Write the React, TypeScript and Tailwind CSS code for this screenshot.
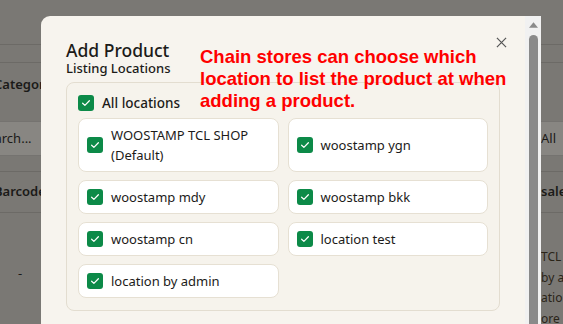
import React from 'react';

const locations = [
  { name: 'WOOSTAMP TCL SHOP (Default)' },
  { name: 'woostamp ygn' },
  { name: 'woostamp mdy' },
  { name: 'woostamp bkk' },
  { name: 'woostamp cn' },
  { name: 'location test' },
  { name: 'location by admin' },
];

function Check() {
  return (
    <span className="flex h-4 w-4 shrink-0 items-center justify-center rounded-[3px] bg-[#0c8a48]">
      <svg viewBox="0 0 16 16" className="h-3 w-3" fill="none">
        <path d="M3.5 8.3l3 2.9 6-6.2" stroke="#fff" strokeWidth="1.6" strokeLinecap="round" strokeLinejoin="round" />
      </svg>
    </span>
  );
}

function Background() {
  return (
    <div className="flex h-[324px] flex-col bg-[#7a7874] text-[13px] text-[#1b1a18] font-['Noto_Sans',sans-serif]">
      <div className="h-[45px] shrink-0 border-b border-[#6c6a66]" />
      <div className="h-[18px] shrink-0 border-b border-[#6c6a66]" />
      <div className="flex h-[44px] shrink-0 items-center font-semibold">
        <span className="-ml-[6px]">Category</span>
      </div>
      <div className="mt-[14px] flex h-[35px] shrink-0 items-center justify-between border-y border-[#757370] bg-[#888682]">
        <span className="-ml-[20px]">Search...</span>
        <span className="w-[22px] overflow-hidden whitespace-nowrap">All</span>
      </div>
      <div className="h-[16px] shrink-0 border-b border-[#6c6a66]" />
      <div className="flex h-[41px] shrink-0 items-center justify-between border-b border-[#6c6a66] font-semibold">
        <span className="-ml-[6px]">Barcode</span>
        <span className="w-[22px] overflow-hidden whitespace-nowrap">sale</span>
      </div>
      <div className="flex flex-1 justify-between">
        <span className="ml-[18px] mt-[51px]">-</span>
        <div className="mt-[34px] flex w-[22px] flex-col overflow-hidden whitespace-nowrap text-[12px] leading-[20.5px] text-[#2a2418]">
          <span>TCL SHOP</span>
          <span>by admin</span>
          <span>ation</span>
          <span>ore</span>
        </div>
      </div>
    </div>
  );
}

export default function App() {
  return (
    <div className="relative h-[324px] w-[563px] overflow-hidden">
      <Background />

      {/* Modal */}
      <div className="absolute left-[41px] top-[16px] flex h-[320px] w-[500px] overflow-hidden rounded-tl-[9px] bg-[#f7f4ee] font-['Noto_Sans',sans-serif] text-[#1c1b19]">
        <div className="relative flex-1 pl-[25px] pr-[25px] pt-[24px]">
          <div className="flex items-start justify-between">
            <div>
              <h2 className="text-[17.5px] font-medium leading-[20px]">Add Product</h2>
              <p className="text-[13px] font-medium leading-[16px]">Listing Locations</p>
            </div>
            <button className="mr-[-7px] mt-[-3px] text-[#555]">
              <svg viewBox="0 0 12 12" className="h-[11px] w-[11px]" fill="none">
                <path d="M1 1l10 10M11 1L1 11" stroke="currentColor" strokeWidth="1.3" />
              </svg>
            </button>
          </div>

          <div className="mt-[6px] rounded-[8px] border border-[#e3ddd0] bg-[#f6f3ec] px-[11px] pb-[12px] pt-[12px]">
            <label className="flex items-center gap-[8px]">
              <Check />
              <span className="text-[13.5px] font-medium leading-[16px]">All locations</span>
            </label>
            <div className="mt-[7px] grid grid-cols-2 gap-x-[9px] gap-y-[8px]">
              {locations.map((l) => (
                <label
                  key={l.name}
                  className="flex items-center gap-[8px] rounded-[8px] border border-[#e6e0d3] bg-white py-[6px] pl-[8px] pr-[8px]"
                >
                  <Check />
                  <span className="text-[13px] leading-[20px]">{l.name}</span>
                </label>
              ))}
            </div>
          </div>

          {/* annotation */}
          <p className="absolute left-[159px] top-[30px] text-[18.5px] font-bold leading-[22px] text-[#ff0000] font-['Liberation_Sans',Arial,sans-serif]">
            Chain stores can choose which
            <br />
            location to list the product at when
            <br />
            adding a product.
          </p>
        </div>

        {/* scrollbar */}
        <div className="flex w-[16px] shrink-0 flex-col items-center bg-[#f1f1f1] pt-[6px]">
          <svg viewBox="0 0 10 6" className="h-[6px] w-[9px]">
            <path d="M5 0L10 6H0z" fill="#8a8a8a" />
          </svg>
          <div className="mt-[7px] w-[9px] flex-1 rounded-t-full bg-[#8a8a8a]" />
        </div>
      </div>
    </div>
  );
}
